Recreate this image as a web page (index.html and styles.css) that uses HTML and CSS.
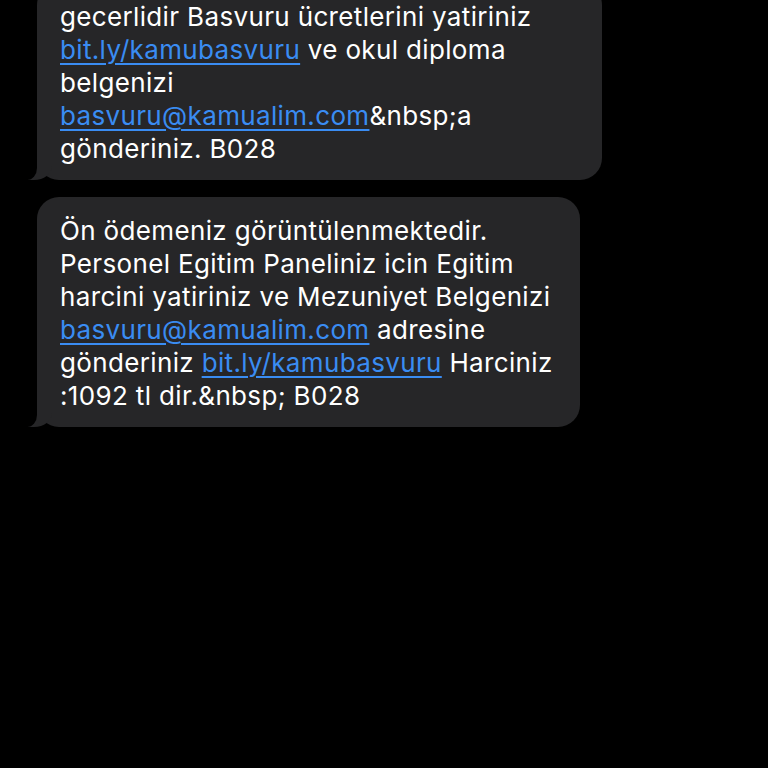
FILE: index.html
```html
<!DOCTYPE html>
<html lang="tr">
<head>
<meta charset="utf-8">
<title>Mesajlar</title>
<link rel="stylesheet" href="styles.css">
</head>
<body>
<main class="thread">
  <div class="bubble bubble-first">
    gecerlidir Basvuru ücretlerini yatiriniz<br>
    <a href="#">bit.ly/kamubasvuru</a> ve okul diploma<br>
    belgenizi<br>
    <a href="#">basvuru@kamualim.com</a>&amp;nbsp;a<br>
    gönderiniz. B028
  </div>
  <div class="bubble bubble-second">
    Ön ödemeniz görüntülenmektedir.<br>
    Personel Egitim Paneliniz icin Egitim<br>
    harcini yatiriniz ve Mezuniyet Belgenizi<br>
    <a href="#">basvuru@kamualim.com</a> adresine<br>
    gönderiniz <a href="#">bit.ly/kamubasvuru</a> Harciniz<br>
    :1092 tl dir.&amp;nbsp; B028
  </div>
</main>
</body>
</html>
```
FILE: styles.css
```css
html, body {
  margin: 0;
  padding: 0;
  background: #000;
}
body {
  width: 768px;
  height: 768px;
  overflow: hidden;
  font-family: "Inter", "Noto Sans", sans-serif;
}
.thread {
  display: flex;
  flex-direction: column;
  align-items: flex-start;
  gap: 17px;
  padding-left: 37px;
}
.bubble {
  position: relative;
  box-sizing: border-box;
  background: #262628;
  color: #fff;
  font-size: 26px;
  letter-spacing: 0.35px;
  line-height: 33px;
  padding: 17px 20px 15px 23px;
  border-radius: 22px;
  white-space: nowrap;
}
.bubble a {
  color: #3a8cf2;
  text-decoration: underline;
  text-decoration-thickness: 2px;
  text-underline-offset: 4px;
}
.bubble-first {
  width: 565px;
  margin-top: -17px;
}
.bubble-second {
  width: 543px;
}
.bubble::before {
  content: "";
  position: absolute;
  left: -9px;
  bottom: 0;
  width: 24px;
  height: 22px;
  background: #262628;
  border-bottom-right-radius: 18px 14px;
}
.bubble::after {
  content: "";
  position: absolute;
  left: -11px;
  bottom: 0;
  width: 11px;
  height: 22px;
  background: #000;
  border-bottom-right-radius: 10px 12px;
}
```
